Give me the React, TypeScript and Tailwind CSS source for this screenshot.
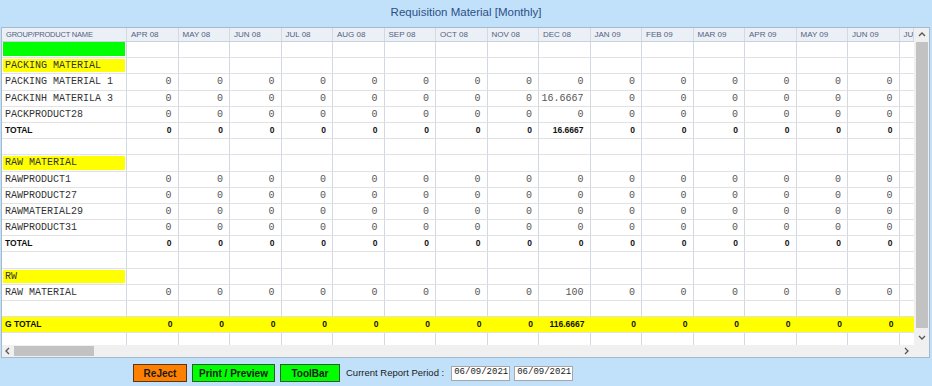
const months = [
  'APR 08', 'MAY 08', 'JUN 08', 'JUL 08', 'AUG 08', 'SEP 08', 'OCT 08', 'NOV 08',
  'DEC 08', 'JAN 09', 'FEB 09', 'MAR 09', 'APR 09', 'MAY 09', 'JUN 09', 'JUL 09',
];

type Row =
  | { kind: 'green' }
  | { kind: 'blank' }
  | { kind: 'group'; name: string }
  | { kind: 'item' | 'total' | 'grand'; name: string; values: string[] };

// every month is 0, only DEC 08 (index 8) may differ; JUL 09 is scrolled out of view
const vals = (dec = '0') => months.map((_, i) => (i === 8 ? dec : i === 15 ? '' : '0'));

const rows: Row[] = [
  { kind: 'green' },
  { kind: 'group', name: 'PACKING MATERIAL' },
  { kind: 'item', name: 'PACKING MATERIAL 1', values: vals() },
  { kind: 'item', name: 'PACKINH MATERILA 3', values: vals('16.6667') },
  { kind: 'item', name: 'PACKPRODUCT28', values: vals() },
  { kind: 'total', name: 'TOTAL', values: vals('16.6667') },
  { kind: 'blank' },
  { kind: 'group', name: 'RAW MATERIAL' },
  { kind: 'item', name: 'RAWPRODUCT1', values: vals() },
  { kind: 'item', name: 'RAWPRODUCT27', values: vals() },
  { kind: 'item', name: 'RAWMATERIAL29', values: vals() },
  { kind: 'item', name: 'RAWPRODUCT31', values: vals() },
  { kind: 'total', name: 'TOTAL', values: vals() },
  { kind: 'blank' },
  { kind: 'group', name: 'RW' },
  { kind: 'item', name: 'RAW MATERIAL', values: vals('100') },
  { kind: 'blank' },
  { kind: 'grand', name: 'G TOTAL', values: vals('116.6667') },
  { kind: 'blank' },
];

const mono = "font-['Liberation_Mono','Courier_New',monospace]";
const sans = "font-['Liberation_Sans',Arial,sans-serif]";

function Chevron({ dir }: { dir: 'up' | 'down' | 'left' | 'right' }) {
  const d = {
    up: 'M1 5 L4 2 L7 5',
    down: 'M1 2 L4 5 L7 2',
    left: 'M5 1 L2 4 L5 7',
    right: 'M2 1 L5 4 L2 7',
  }[dir];
  return (
    <svg width="8" height="8" viewBox="0 0 8 8" className="block">
      <path d={d} fill="none" stroke="#555" strokeWidth="1.3" />
    </svg>
  );
}

function GridRow({ row }: { row: Row }) {
  const cell = 'h-full shrink-0 border-r border-b border-r-[#d3d9e3] border-b-[#e2e2e2]';

  if (row.kind === 'grand') {
    return (
      <div className="flex h-[16.2px] bg-[#ffff00] border-b border-[#e2e2e2]">
        <div className={`w-[125px] shrink-0 pl-[3px] flex items-center font-bold text-[8.5px] text-[#111] ${sans}`}>
          {row.name}
        </div>
        {row.values.map((v, i) => (
          <div key={i} className={`w-[51.5px] shrink-0 pr-[6px] flex items-center justify-end font-bold text-[8.5px] text-[#111] ${sans}`}>
            {v}
          </div>
        ))}
      </div>
    );
  }

  let first = null;
  if (row.kind === 'green') {
    first = <div className="h-full px-[1px] pb-[1px]"><div className="h-full bg-[#00ff00]" /></div>;
  } else if (row.kind === 'group') {
    first = (
      <div className="h-full p-[1px]">
        <div className={`h-full bg-[#ffff00] pl-[2px] flex items-center text-[10px] text-[#333] ${mono}`}>{row.name}</div>
      </div>
    );
  } else if (row.kind === 'item') {
    first = <div className={`h-full pl-[3px] flex items-center text-[10px] text-[#333] ${mono}`}>{row.name}</div>;
  } else if (row.kind === 'total') {
    first = <div className={`h-full pl-[3px] flex items-center font-bold text-[8.5px] text-[#111] ${sans}`}>{row.name}</div>;
  }

  const values = 'values' in row ? row.values : months.map(() => '');

  return (
    <div className="flex h-[16.2px]">
      <div className={`w-[125px] ${cell}`}>{first}</div>
      {values.map((v, i) => (
        <div
          key={i}
          className={`w-[51.5px] ${cell} pr-[6px] flex items-center justify-end ${
            row.kind === 'total' ? `font-bold text-[8.5px] text-[#111] ${sans}` : `text-[10px] text-[#555] ${mono}`
          }`}
        >
          {v}
        </div>
      ))}
    </div>
  );
}

export default function App() {
  return (
    <div className={`w-[932px] h-[386px] bg-[#c1e1fa] overflow-hidden ${sans}`}>
      {/* Title */}
      <div className="h-[27px] pt-[4px] text-center text-[11.5px] leading-[16px] text-[#2d4f86]">
        Requisition Material [Monthly]
      </div>

      {/* Grid with scrollbars */}
      <div className="ml-[1px] w-[929px] h-[331px] border border-[#a9b9cc] bg-white flex flex-col">
        <div className="flex h-[317px]">
          <div className="w-[912px] overflow-hidden">
            {/* Header */}
            <div className="flex h-[14px] bg-[#ebeff6] border-b border-[#c9d1dc]">
              <div className="w-[125px] shrink-0 pl-[4px] flex items-center border-r border-[#d3d9e3] text-[7.5px] tracking-[-0.2px] text-[#52627e] whitespace-nowrap">
                GROUP/PRODUCT NAME
              </div>
              {months.map((m, i) => (
                <div
                  key={m}
                  className={`shrink-0 pl-[4px] flex items-center border-r border-[#d3d9e3] text-[8px] text-[#52627e] whitespace-nowrap overflow-hidden ${
                    i === 15 ? 'w-[14px]' : 'w-[51.5px]'
                  }`}
                >
                  {i === 15 ? 'JU' : m}
                </div>
              ))}
            </div>
            {rows.map((r, i) => (
              <GridRow key={i} row={r} />
            ))}
          </div>

          {/* Vertical scrollbar */}
          <div className="w-[15px] bg-[#f0f0f0] flex flex-col items-center">
            <div className="h-[14px] flex items-center justify-center"><Chevron dir="up" /></div>
            <div className="w-[12px] h-[286px] bg-[#c2c2c2]" />
            <div className="flex-1 flex items-end justify-center pb-[3px]"><Chevron dir="down" /></div>
          </div>
        </div>

        {/* Horizontal scrollbar */}
        <div className="flex h-[12px]">
          <div className="w-[912px] bg-[#f0f0f0] flex items-center">
            <div className="w-[12px] flex justify-center"><Chevron dir="left" /></div>
            <div className="w-[80px] h-[10px] bg-[#c2c2c2]" />
            <div className="flex-1" />
            <div className="w-[12px] mr-[1px] flex justify-center"><Chevron dir="right" /></div>
          </div>
          <div className="w-[15px] bg-[#f0f0f0]" />
        </div>
      </div>

      {/* Footer */}
      <div className="flex items-center pl-[133px] pt-[6px]">
        <button className="w-[54px] h-[18px] bg-[#ff8000] border border-[#5b3515] text-[10px] font-bold text-[#1a1a1a]">
          ReJect
        </button>
        <button className="ml-[5px] w-[83px] h-[18px] bg-[#00ff00] border border-[#2b5e2b] text-[10px] font-bold text-[#1a1a1a]">
          Print / Preview
        </button>
        <button className="ml-[5px] w-[60px] h-[18px] bg-[#00ff00] border border-[#2b5e2b] text-[10px] font-bold text-[#1a1a1a]">
          ToolBar
        </button>
        <span className="ml-[6px] text-[9.5px] text-[#1a1a1a]">Current Report Period :</span>
        <div className={`ml-[7px] w-[59px] h-[15px] bg-white border border-[#a7a7a7] pl-[2px] flex items-center text-[9px] text-[#222] ${mono}`}>
          06/09/2021
        </div>
        <div className={`ml-[4px] w-[59px] h-[15px] bg-white border border-[#a7a7a7] pl-[2px] flex items-center text-[9px] text-[#222] ${mono}`}>
          06/09/2021
        </div>
      </div>
    </div>
  );
}
